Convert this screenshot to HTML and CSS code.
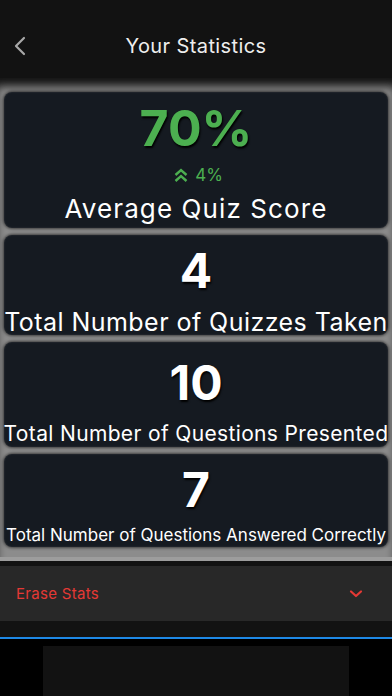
FILE: index.html
```html
<!DOCTYPE html>
<html lang="en">
<head>
    <meta charset="UTF-8">
    <meta name="viewport" content="width=device-width, initial-scale=1.0">
    <title>Your Statistics</title>
    <link rel="stylesheet" href="styles.css">
</head>
<body>
    <header class="topbar">
        <svg class="back" width="14" height="22" viewBox="0 0 14 22">
            <path d="M11 3 L3 11 L11 19" fill="none" stroke="#a8a8a8" stroke-width="2.2" stroke-linecap="round" stroke-linejoin="round"/>
        </svg>
        <h1>Your Statistics</h1>
    </header>
    <main class="stats">
        <div class="card card-score">
            <div class="score">70%</div>
            <div class="trend">
                <svg width="16" height="16" viewBox="0 0 16 16">
                    <path d="M2.5 8 L8 3 L13.5 8 M2.5 14 L8 9 L13.5 14" fill="none" stroke="#4caf50" stroke-width="2.4" stroke-linejoin="miter"/>
                </svg>
                <span>4%</span>
            </div>
            <div class="label label-avg">Average Quiz Score</div>
        </div>
        <div class="card card-quizzes">
            <div class="value">4</div>
            <div class="label label-lg">Total Number of Quizzes Taken</div>
        </div>
        <div class="card card-presented">
            <div class="value">10</div>
            <div class="label label-md">Total Number of Questions Presented</div>
        </div>
        <div class="card card-correct">
            <div class="value">7</div>
            <div class="label label-sm">Total Number of Questions Answered Correctly</div>
        </div>
    </main>
    <div class="spacer"></div>
    <div class="erase-row">
        <span>Erase Stats</span>
        <svg width="14" height="10" viewBox="0 0 14 10">
            <path d="M2 2.5 L7 7 L12 2.5" fill="none" stroke="#e53935" stroke-width="2.2" stroke-linecap="round" stroke-linejoin="round"/>
        </svg>
    </div>
    <div class="spacer-lg"></div>
    <div class="ad-area">
        <div class="ad-box"></div>
    </div>
</body>
</html>
```

FILE: styles.css
```css
body {
    margin: 0;
    background-color: #000;
    font-family: Inter, Roboto, sans-serif;
    color: #fff;
    width: 392px;
    height: 696px;
    overflow: hidden;
}
.topbar {
    height: 78px;
    background-color: #121212;
    display: flex;
    align-items: center;
    justify-content: center;
    position: relative;
    padding-top: 14px;
    box-sizing: border-box;
}
.topbar h1 {
    margin: 0;
    font-size: 20px;
    font-weight: 400;
    letter-spacing: 0.4px;
    color: #eeeeee;
}
.back {
    position: absolute;
    left: 13px;
    top: 35px;
}
.stats {
    background-color: #8c8c8c;
    box-shadow: inset 0 12px 10px -4px #121212;
    padding: 14px 4px 10px;
    display: flex;
    flex-direction: column;
    gap: 7px;
    border-bottom: 4px solid #9d9d9d;
}
.card {
    background-color: #151a21;
    border-radius: 8px;
    box-shadow: 0 0 3px 1px rgba(30, 30, 30, 0.7), inset 0 0 2px rgba(255, 255, 255, 0.15);
    display: flex;
    flex-direction: column;
    align-items: center;
    text-align: center;
}
.card-score {
    height: 136px;
}
.card-quizzes {
    height: 100px;
}
.card-presented {
    height: 105px;
}
.card-correct {
    height: 93px;
}
.score {
    color: #4caf50;
    font-size: 50px;
    font-weight: 700;
    line-height: 52px;
    margin-top: 10px;
    text-shadow: 1px 2px 2px #000;
}
.trend {
    display: flex;
    align-items: center;
    gap: 6px;
    color: #4caf50;
    font-size: 17px;
    margin-top: 11px;
    margin-left: 4px;
}
.value {
    font-size: 48px;
    font-weight: 700;
    line-height: 48px;
    margin-top: 12px;
    text-shadow: 1px 2px 2px #000;
}
.label {
    white-space: nowrap;
}
.label-avg {
    font-size: 26px;
    letter-spacing: 1.1px;
    margin-top: 8px;
}
.label-lg {
    font-size: 25px;
    letter-spacing: 0.45px;
    margin-top: 12px;
}
.label-md {
    font-size: 21px;
    letter-spacing: 0.35px;
    margin-top: 14px;
}
.card-presented .value {
    margin-top: 17px;
}
.card-correct .value {
    margin-top: 12px;
}
.label-sm {
    font-size: 17px;
    margin-top: 11px;
}
.spacer {
    height: 5px;
    background-color: #121212;
}
.erase-row {
    height: 55px;
    background-color: #282828;
    display: flex;
    align-items: center;
    justify-content: space-between;
    padding: 0 29px 0 16px;
    color: #e53935;
    font-size: 15px;
    letter-spacing: 0.3px;
}
.spacer-lg {
    height: 16px;
    background-color: #121212;
    border-bottom: 2px solid #1e88e5;
}
.ad-area {
    padding: 7px 43px 0;
}
.ad-box {
    height: 60px;
    background-color: #121212;
}
```
